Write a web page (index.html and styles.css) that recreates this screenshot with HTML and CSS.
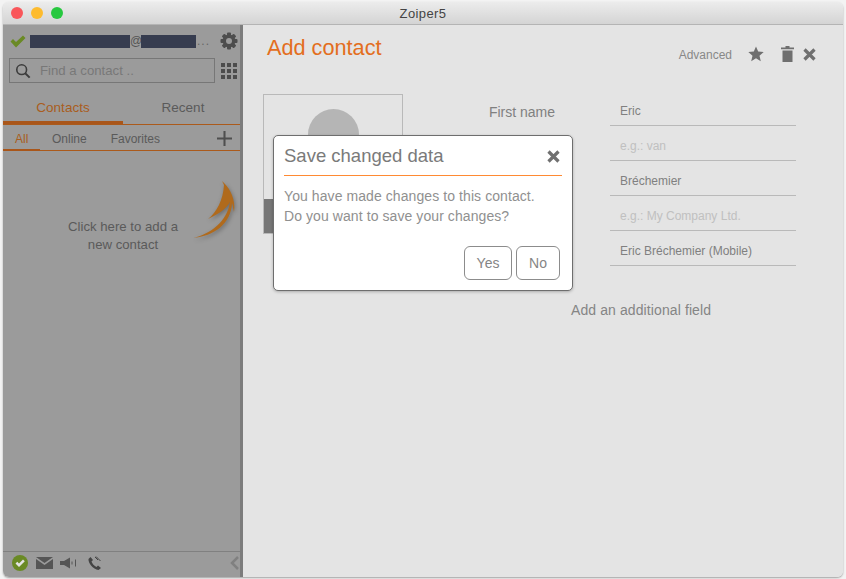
FILE: index.html

```html
<!DOCTYPE html>
<html lang="en">
<head>
    <meta charset="UTF-8">
    <title>Zoiper5</title>
    <link rel="stylesheet" href="styles.css">
</head>
<body>
<div class="window">
    <div class="titlebar">
        <div class="lights">
            <span class="light red"></span>
            <span class="light yellow"></span>
            <span class="light green"></span>
        </div>
        <div class="title">Zoiper5</div>
    </div>
    <div class="app">
        <aside class="sidebar">
            <div class="account">
                <svg class="check" width="16" height="13" viewBox="0 0 16 13"><path d="M0.5 6.5 L3 4 L6 7 L13 0.5 L15.5 3 L6 12.5 Z" fill="#6a8a25"/></svg>
                <span class="mask mask-user"></span>
                <span class="at">@</span>
                <span class="mask mask-host"></span>
                <span class="more">...</span>
                <svg class="gear" width="18" height="18" viewBox="0 0 18 18">
                    <g fill="#4d4d4d">
                        <circle cx="9" cy="9" r="6.5"/>
                        <rect x="7" y="0.5" width="4" height="17" rx="1"/>
                        <rect x="7" y="0.5" width="4" height="17" rx="1" transform="rotate(45 9 9)"/>
                        <rect x="7" y="0.5" width="4" height="17" rx="1" transform="rotate(90 9 9)"/>
                        <rect x="7" y="0.5" width="4" height="17" rx="1" transform="rotate(135 9 9)"/>
                    </g>
                    <circle cx="9" cy="9" r="3" fill="#9b9b9b"/>
                </svg>
            </div>
            <div class="search-row">
                <div class="search">
                    <svg width="16" height="16" viewBox="0 0 18 18"><circle cx="7.5" cy="7.5" r="5.5" fill="none" stroke="#3c3c3c" stroke-width="1.8"/><path d="M11.5 11.5 L16.5 16.5" stroke="#3c3c3c" stroke-width="2.2"/></svg>
                    <span class="search-text">Find a contact ..</span>
                </div>
                <div class="dialpad">
                    <i></i><i></i><i></i><i></i><i></i><i></i><i></i><i></i><i></i>
                </div>
            </div>
            <div class="tabs">
                <div class="tab active">Contacts</div>
                <div class="tab">Recent</div>
            </div>
            <div class="subtabs">
                <div class="subtab active">All</div>
                <div class="subtab">Online</div>
                <div class="subtab">Favorites</div>
                <svg class="plus" width="15" height="15" viewBox="0 0 16 16"><path d="M6.9 0 H9.1 V6.9 H16 V9.1 H9.1 V16 H6.9 V9.1 H0 V6.9 H6.9 Z" fill="#4f4f4f"/></svg>
            </div>
            <div class="list">
                <svg class="arrow" width="50" height="66" viewBox="0 0 50 66">
                    <path d="M1 58 C18 54 35 42 38 22 C35 28 27 34 16 39 C25 32 31 20 32 5 L30 1 C37 7 44 18 42 32 C41 28 41 26 40 23 C39 44 22 56 1 58 Z" fill="#b06a1c"/>
                </svg>
                <p class="hint">Click here to add a<br>new contact</p>
            </div>
            <div class="statusbar">
                <svg width="18" height="18" viewBox="0 0 18 18"><circle cx="9" cy="9" r="8" fill="#6a8a25"/><path d="M4.5 9.5 L6.3 7.7 L8 9.4 L12 5.5 L13.8 7.3 L8 13 Z" fill="#e4e4e4"/></svg>
                <svg class="status-mail" width="17" height="12" viewBox="0 0 17 12"><path d="M0 0 H17 L8.5 6 Z M0 2 V12 H17 V2 L8.5 8 Z" fill="#555"/></svg>
                <svg class="status-speaker" width="17" height="12" viewBox="0 0 17 12"><path d="M0 4 H4 L10 0.5 V11.5 L4 8 H0 Z" fill="#555"/><path d="M12 4.5 V7.5 M15.5 2.5 V9.5" stroke="#555" stroke-width="1"/></svg>
                <svg class="status-phone" width="15" height="15" viewBox="0 0 15 15"><path d="M3.5 1 L1.5 3 C1 7 6 13 11.5 14 L14 12 L11 9.5 L9.5 11 C7.5 10 5 7.5 4.5 5.5 L6 4 Z" fill="#444"/><path d="M8 1 L11 4 M9 0.5 L13.5 5" stroke="#444" stroke-width="1"/></svg>
                <svg class="status-collapse" width="10" height="14" viewBox="0 0 10 14"><path d="M8 1 L2 7 L8 13" fill="none" stroke="#808080" stroke-width="2.5"/></svg>
            </div>
        </aside>
        <main class="main">
            <div class="main-head">
                <h1>Add contact</h1>
                <div class="actions">
                    <span class="advanced">Advanced</span>
                    <svg class="act-star" width="16" height="16" viewBox="0 0 16 16"><path d="M8 0.5 L10.2 5.6 L15.7 6.1 L11.5 9.7 L12.8 15.2 L8 12.3 L3.2 15.2 L4.5 9.7 L0.3 6.1 L5.8 5.6 Z" fill="#6f6f6f"/></svg>
                    <svg class="act-trash" width="13" height="16" viewBox="0 0 13 16"><path d="M4.5 0 H8.5 V1.5 H13 V3.2 H0 V1.5 H4.5 Z M1.5 4.5 H11.5 V16 H1.5 Z" fill="#6f6f6f"/></svg>
                    <svg class="act-close" width="13" height="13" viewBox="0 0 13 13"><path d="M1.5 1.5 L11.5 11.5 M11.5 1.5 L1.5 11.5" stroke="#6f6f6f" stroke-width="3.2"/></svg>
                </div>
            </div>
            <div class="main-body">
                <div class="avatar">
                    <div class="avatar-head"></div>
                    <div class="avatar-strip"></div>
                </div>
                <div class="fields">
                    <div class="field"><label class="field-label">First name</label><div class="field-value">Eric</div></div>
                    <div class="field"><span class="field-label"></span><div class="field-value empty">e.g.: van</div></div>
                    <div class="field"><span class="field-label"></span><div class="field-value">Bréchemier</div></div>
                    <div class="field"><span class="field-label"></span><div class="field-value empty">e.g.: My Company Ltd.</div></div>
                    <div class="field"><span class="field-label"></span><div class="field-value">Eric Bréchemier (Mobile)</div></div>
                    <div class="add-field">Add an additional field</div>
                </div>
            </div>
            <div class="dialog">
                <div class="dialog-head">
                    <span class="dialog-title">Save changed data</span>
                    <svg width="13" height="13" viewBox="0 0 13 13"><path d="M1.5 1.5 L11.5 11.5 M11.5 1.5 L1.5 11.5" stroke="#707070" stroke-width="3.2"/></svg>
                </div>
                <p class="dialog-text">You have made changes to this contact.<br>Do you want to save your changes?</p>
                <div class="dialog-buttons">
                    <button class="btn btn-yes">Yes</button>
                    <button class="btn btn-no">No</button>
                </div>
            </div>
        </main>
    </div>
</div>
</body>
</html>
```

FILE: styles.css

```css
* {
    box-sizing: border-box;
}
body {
    margin: 0;
    height: 579px;
    overflow: hidden;
    background-color: #f3f3f3;
    font-family: "Liberation Sans", Arial, sans-serif;
    color: #777;
}
.window {
    margin: 2px 3px;
    height: 575px;
    display: flex;
    flex-direction: column;
    border-radius: 6px;
    overflow: hidden;
    box-shadow: 0 1px 2px rgba(0, 0, 0, 0.35);
}
.titlebar {
    height: 23px;
    flex: none;
    display: flex;
    align-items: center;
    background: linear-gradient(#ececec, #d4d4d4);
    border-bottom: 1px solid #b4b4b4;
    position: relative;
}
.lights {
    display: flex;
    gap: 8px;
    padding-left: 8px;
}
.light {
    width: 12px;
    height: 12px;
    border-radius: 50%;
}
.red { background-color: #f9565a; }
.yellow { background-color: #fdbb2e; }
.green { background-color: #27c83f; }
.title {
    position: absolute;
    left: 0;
    right: 0;
    text-align: center;
    font-size: 13px;
    letter-spacing: 0.4px;
    color: #444;
}
.app {
    flex: 1;
    display: flex;
    min-height: 0;
}

/* left column, dimmed behind the dialog */
.sidebar {
    width: 240px;
    flex: none;
    display: flex;
    flex-direction: column;
    background-color: #9b9b9b;
    border-right: 3px solid #7c7c7c;
    color: #5a5a5a;
}
.account {
    height: 32px;
    display: flex;
    align-items: center;
    padding: 0 2px 0 7px;
}
.check {
    flex: none;
    margin-right: 4px;
}
.mask {
    height: 13px;
    background-color: #363c4f;
}
.mask-user { width: 100px; }
.mask-host { width: 55px; }
.at {
    width: 11px;
    font-size: 12px;
    text-align: center;
    color: #555;
}
.more {
    width: 14px;
    font-size: 12px;
    letter-spacing: 1px;
    padding-left: 1px;
    color: #666;
}
.gear {
    margin-left: auto;
}
.search-row {
    display: flex;
    align-items: center;
    padding-left: 6px;
    margin-top: 1px;
}
.search {
    width: 206px;
    height: 25px;
    display: flex;
    align-items: center;
    gap: 9px;
    padding-left: 5px;
    border: 1px solid #777;
}
.search-text {
    font-size: 13.2px;
    color: #787878;
}
.dialpad {
    width: 16px;
    margin-left: 6px;
    display: grid;
    grid-template-columns: repeat(3, 4px);
    gap: 2px;
    justify-content: space-between;
}
.dialpad i {
    height: 4px;
    background-color: #4d4d4d;
}
.tabs {
    display: flex;
    height: 42px;
    overflow: hidden;
    border-bottom: 1px solid #ab5a1b;
}
.tab {
    width: 120px;
    flex: none;
    padding-top: 17px;
    font-size: 13.5px;
    text-align: center;
}
.tab.active {
    color: #a95d20;
    border-bottom: 3px solid #a9561a;
}
.subtabs {
    height: 26px;
    display: flex;
    border-bottom: 1px solid #ab5a1b;
}
.subtab {
    font-size: 12px;
    padding: 7px 12px 0;
}
.subtab.active {
    width: 37px;
    color: #a95d20;
    height: 26px;
    border-bottom: 2px solid #a9561a;
}
.plus {
    margin-left: auto;
    margin-right: 8px;
    margin-top: 6px;
}
.list {
    flex: 1;
    position: relative;
}
.arrow {
    position: absolute;
    left: 189px;
    top: 29px;
    overflow: visible;
    filter: drop-shadow(1px 2px 2px rgba(0, 0, 0, 0.3));
}
.hint {
    margin: 67px 0 0;
    width: 240px;
    text-align: center;
    font-size: 13.2px;
    line-height: 18px;
    color: #5a5a5a;
}
.statusbar {
    height: 26px;
    flex: none;
    display: flex;
    align-items: center;
    padding: 0 0 3px 8px;
    border-top: 1px solid #808080;
}
.status-mail { margin-left: 7px; }
.status-speaker { margin-left: 7px; }
.status-phone { margin-left: 10px; }
.status-collapse { margin-left: auto; }

/* contact form */
.main {
    flex: 1;
    position: relative;
    background-color: #e4e4e4;
    padding: 0 0 0 20px;
}
.main-head {
    display: flex;
    justify-content: space-between;
}
h1 {
    margin: 11px 0 0 4px;
    font-size: 21.7px;
    font-weight: normal;
    line-height: 24px;
    color: #e36e20;
}
.actions {
    display: flex;
    align-items: center;
    height: 16px;
    margin-top: 21px;
    padding-right: 27px;
}
.advanced {
    font-size: 12px;
    color: #888;
    margin: 2px 16px 0 0;
}
.act-trash { margin-left: 17px; }
.act-close { margin-left: 9px; }
.main-body {
    display: flex;
    margin-top: 32px;
}
.avatar {
    width: 140px;
    height: 140px;
    border: 1px solid #b9b9b9;
    position: relative;
    overflow: hidden;
}
.avatar-head {
    width: 51px;
    height: 51px;
    border-radius: 50%;
    background-color: #b5b5b5;
    margin: 14px auto 0;
}
.avatar-strip {
    position: absolute;
    left: 0;
    bottom: 0;
    width: 100%;
    height: 34px;
    background-color: #777;
}
.fields {
    width: 393px;
    margin-top: -3px;
}
.field {
    display: flex;
    height: 35px;
    align-items: stretch;
}
.field-label {
    width: 152px;
    font-size: 14px;
    text-align: right;
    padding-top: 13px;
    color: #808080;
}
.field-value {
    width: 186px;
    margin-left: 55px;
    padding: 13px 0 0 10px;
    font-size: 12px;
    color: #808080;
    border-bottom: 1px solid #b9b9b9;
}
.field-value.empty {
    color: #c0c0c0;
}
.add-field {
    width: 140px;
    margin: 36px 0 0 168px;
    font-size: 14px;
    letter-spacing: 0.1px;
    white-space: nowrap;
    color: #858585;
}
.dialog {
    position: absolute;
    left: 30px;
    top: 110px;
    width: 300px;
    height: 156px;
    padding: 0 10px;
    background-color: #fff;
    border: 1px solid #6e6e6e;
    border-radius: 5px;
    box-shadow: 0 1px 3px rgba(0, 0, 0, 0.25);
}
.dialog-head {
    display: flex;
    align-items: center;
    justify-content: space-between;
    height: 40px;
    padding: 1px 2px 0 0;
    border-bottom: 1px solid #ff8a33;
}
.dialog-title {
    font-size: 18.5px;
    color: #7a7a7a;
}
.dialog-text {
    margin: 10px 0 0;
    font-size: 14px;
    letter-spacing: 0.08px;
    line-height: 20px;
    color: #909090;
}
.dialog-buttons {
    display: flex;
    justify-content: flex-end;
    gap: 4px;
    margin: 20px 2px 0 0;
}
.btn {
    height: 34px;
    background-color: #fff;
    border: 1px solid #8c8c8c;
    border-radius: 6px;
    font-family: inherit;
    font-size: 14px;
    color: #858585;
    padding: 0;
}
.btn-yes { width: 48px; }
.btn-no { width: 44px; }
```
